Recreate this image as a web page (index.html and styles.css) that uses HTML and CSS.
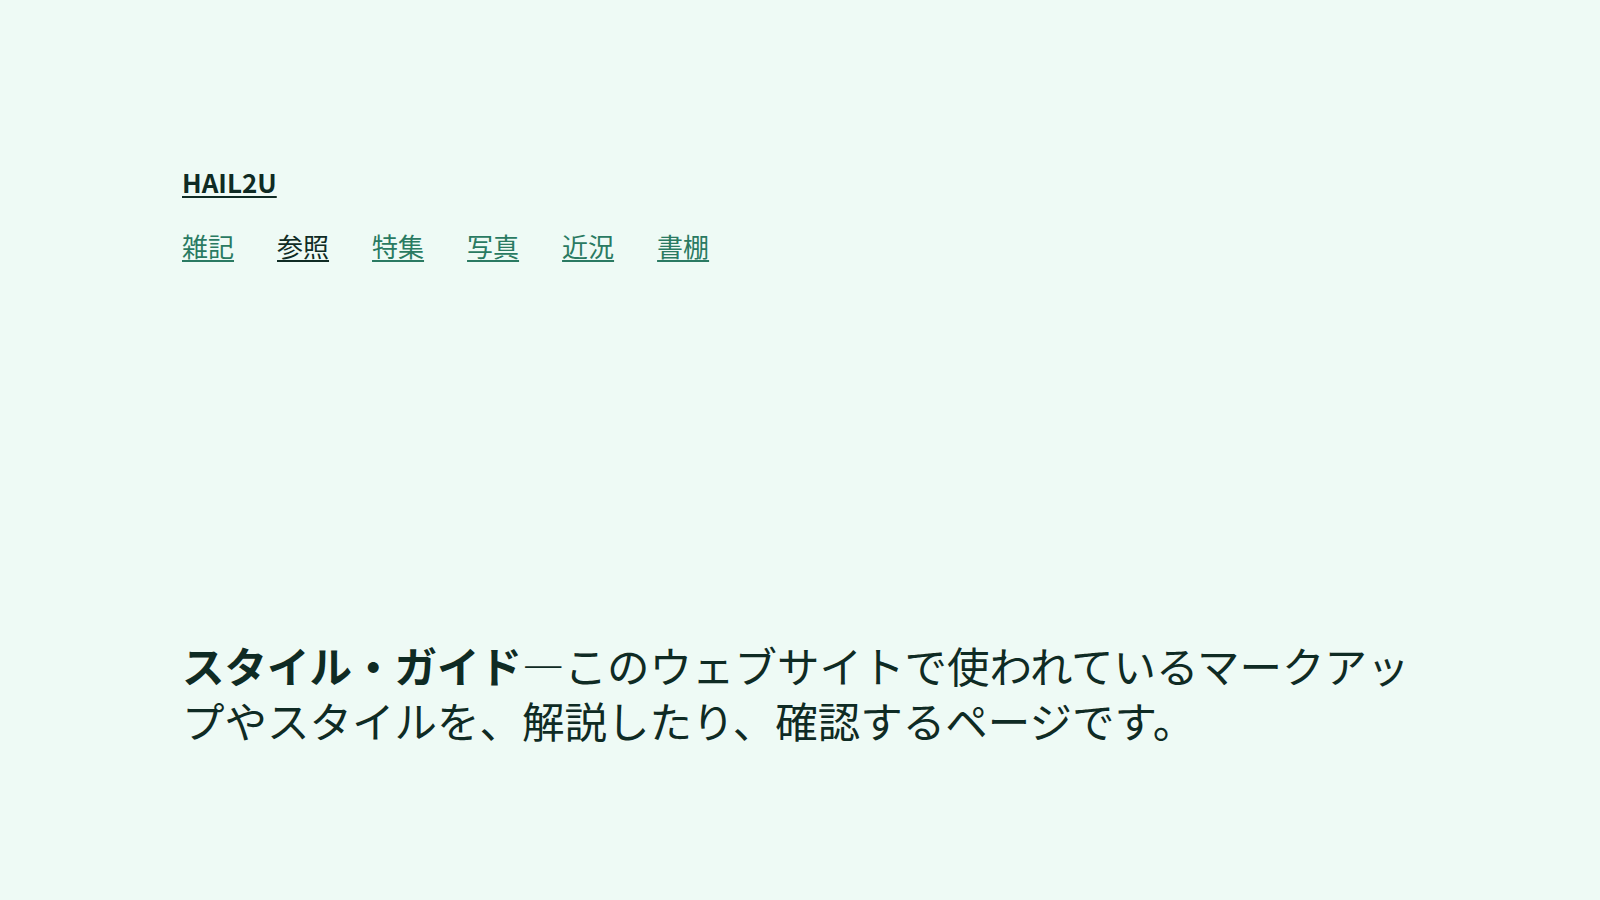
FILE: index.html
```html
<!DOCTYPE html>
<html lang="ja">
<head>
<meta charset="utf-8">
<title>スタイル・ガイド | HAIL2U</title>
<link rel="stylesheet" href="styles.css">
</head>
<body>
<div class="page">
  <header class="site-header">
    <p class="site-title"><a href="#">HAIL2U</a></p>
    <nav class="global-nav">
      <ul class="nav-list">
        <li><a href="#">雑記</a></li>
        <li><a href="#" class="is-current">参照</a></li>
        <li><a href="#">特集</a></li>
        <li><a href="#">写真</a></li>
        <li><a href="#">近況</a></li>
        <li><a href="#">書棚</a></li>
      </ul>
    </nav>
  </header>
  <main class="hero">
    <p class="lead"><strong>スタイル・ガイド</strong>―このウェブサイトで使われているマークアップやスタイルを、解説したり、確認するページです。</p>
  </main>
</div>
</body>
</html>
```

FILE: styles.css
```css
html, body {
  margin: 0;
  padding: 0;
}
body {
  background: #eefaf5;
  color: #0f2b24;
  font-family: "Noto Sans CJK JP", "Noto Sans", sans-serif;
}
.page {
  padding: 162px 182px 0;
}
.site-title {
  margin: 0;
  font-size: 26px;
  line-height: 1.5;
  font-weight: 700;
}
.site-title a {
  color: #0f2b24;
  text-decoration: underline;
  text-decoration-thickness: 2px;
  text-underline-offset: 3px;
}
.global-nav {
  margin-top: 25px;
}
.nav-list {
  list-style: none;
  margin: 0;
  padding: 0;
  display: flex;
  gap: 43px;
  font-size: 26px;
  line-height: 1.5;
}
.nav-list a {
  color: #2a7a62;
  text-decoration: underline;
  text-decoration-thickness: 1.5px;
  text-underline-offset: 3px;
}
.nav-list a.is-current {
  color: #0f2b24;
}
.hero {
  margin-top: 372px;
}
.lead {
  margin: 0;
  font-size: 42.5px;
  line-height: 55px;
}
.lead strong {
  font-weight: 700;
}
```
